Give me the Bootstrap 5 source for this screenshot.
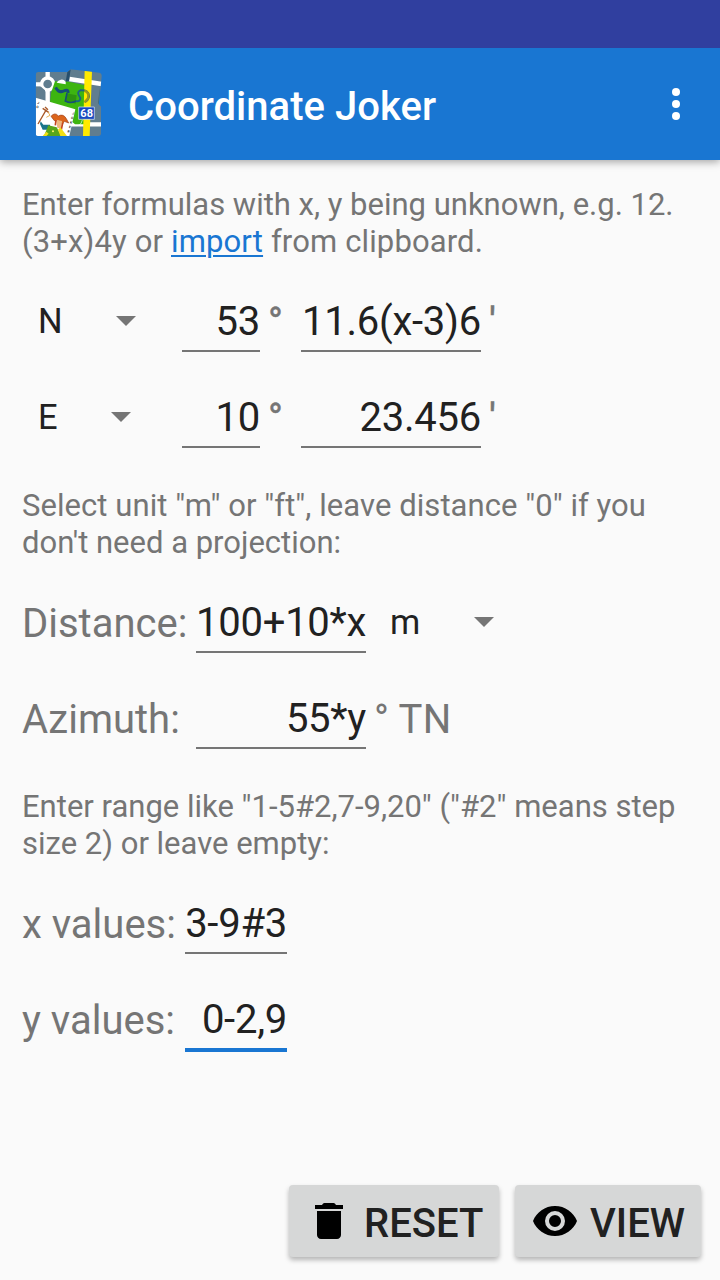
<!DOCTYPE html>
<html lang="en">
<head>
<meta charset="utf-8">
<meta name="viewport" content="width=device-width, initial-scale=1">
<title>Coordinate Joker</title>
<link href="https://cdn.jsdelivr.net/npm/bootstrap@5.3.0/dist/css/bootstrap.min.css" rel="stylesheet">
<style>
body{font-family:Roboto,"Liberation Sans",sans-serif;background:#fafafa;color:#212121;height:1280px;overflow:hidden}
.status-strip{height:48px;background:#303f9f;z-index:1}
.app-bar{height:112px;background:#1976d2;padding:0 0 0 30px;box-shadow:0 2px 8px rgba(0,0,0,.35)}
.app-title{font-size:40px;font-weight:500;line-height:48px;margin-left:18px;margin-top:6px;letter-spacing:.05px}
.page{padding:26px 22px 0;font-size:40px;line-height:48px}
.hint{font-size:31px;line-height:37px;color:#757575;white-space:nowrap;margin:-2px 0 37px}
.hint:first-child{margin-top:0}
.hint a{color:#1976d2;text-decoration-thickness:2px;text-underline-offset:3px}
.hint .wide{letter-spacing:.14px}
.form-line{height:96px}
.lbl{color:#757575;margin-top:2px;white-space:nowrap}
.lbl-proj{width:174px}.lbl-range{width:163px}
.deg{width:41px;padding-left:8px}.tick{width:217px;padding-left:8px}
.azi{padding-left:8px;letter-spacing:.25px}
.deg,.tick{-webkit-text-stroke:.5px #757575}
.field{height:55px;padding:0 0 5px;border:0;border-bottom:2px solid #757575;border-radius:0;background:none;color:#212121;font-size:40px;line-height:48px;text-align:right;letter-spacing:-.25px;outline:0}
.field.active{border-bottom:4px solid #1976d2;height:57px;padding-bottom:5px}
.pick{font-size:34.5px;line-height:49px}
.caret{width:20px;height:10px;background:#757575;clip-path:polygon(0 0,100% 0,50% 100%);margin-top:19px}
.pick-n{width:78px}.pick-e{width:73px}.pick-m{width:84px}
.w-deg{width:78px}.w-min{width:180px}.w-proj{width:170px}.w-range{width:102px}
.act-bar{padding:0 19px 23px}
.act{height:72px;padding:0 0 0 16px;background:#d6d7d7;border:0;border-radius:4px;font-size:40px;font-weight:500;line-height:48px;color:#212121;box-shadow:0 3px 5px rgba(0,0,0,.28)}
.act span{margin:5px 0 0 11px}
.act-reset{width:210px}.act-view{width:186px}
</style>
</head>
<body class="d-flex flex-column">
<div class="status-strip flex-shrink-0 position-relative"></div>
<nav class="app-bar d-flex align-items-center text-white flex-shrink-0">
<svg width="80" height="80" viewBox="0 0 240 240" aria-hidden="true">
<defs><clipPath id="tile"><path d="M24 24H112L122 16L208 26Q216 28 215 38L206 122L213 128V210Q212 216 205 216H24Q17 216 17 208V32Q17 25 24 24Z"/></clipPath></defs>
<g clip-path="url(#tile)">
<path fill="#607d8f" d="M0 0H240V240H0Z"/>
<path stroke="#fff" stroke-width="13" fill="none" d="M53 20V140M17 61H120M118 45L215 60M120 181H215"/>
<circle cx="53" cy="60" r="18" fill="#607d8f" stroke="#fff" stroke-width="10"/>
<path fill="#3db510" d="M75 52H110L165 64V181H135L60 115L63 87Z"/>
<path fill="#607d8f" d="M189 68H215V174H186ZM17 68H33L45 79V108L17 99Z"/>
<path fill="#264f6c" d="M112 24L122 16L117 51L107 53Z"/>
<path fill="#fff" d="M84 51Q98 41 107 53V61L80 56Z"/>
<path fill="#ffea00" d="M164 20H186L179 216H159Z"/>
<path fill="#2d9410" d="M109 88L140 94L137 119L106 111Z"/>
<path fill="none" stroke="#154f76" stroke-width="9" d="M77 70Q86 88 101 81T114 87"/>
<path fill="none" stroke="#154f76" stroke-width="5" d="M111 87L106 111Q122 120 138 111"/>
<path fill="none" stroke="#196582" stroke-width="6" d="M138 111Q151 114 151 102Q138 84 151 79Q177 77 177 97Q174 111 164 114"/>
<path fill="none" stroke="#9d9819" stroke-width="7" d="M163 80Q179 86 174 103L164 115"/>
<path fill="#2b5b73" opacity=".65" d="M204 119L209 71V119Z"/>
<path fill="#fff" d="M17 101L136 136L118 216H17Z"/>
<g fill="#333" font-family="Roboto,sans-serif" font-size="10" font-weight="700">
<text transform="translate(21 119) rotate(16)">J</text><text transform="translate(18 131) rotate(16)">O</text>
<text transform="translate(126 151) rotate(16)">J</text><text transform="translate(122 164) rotate(16)">O</text><text transform="translate(119 178) rotate(16)">K</text><text transform="translate(116 191) rotate(16)">E</text><text transform="translate(112 205) rotate(16)">R</text></g>
<path fill="none" stroke="#a85828" stroke-width="4" d="M24 180L49 137M38 133L57 146M45 129L54 137"/>
<path fill="none" stroke="#e8b15a" stroke-width="3" d="M54 144L60 154L49 160"/>
<path fill="#dc651c" stroke="#9b3d17" stroke-width="2" d="M63 157Q75 143 85 156Q100 148 109 164L116 177L103 172L98 180Q88 166 73 170Z"/>
<path fill="#efb77e" d="M79 167L96 171L94 193L82 192Z"/>
<path fill="none" stroke="#c5451c" stroke-width="5" d="M78 168L76 184M98 177L94 197"/>
<path fill="#18758a" d="M32 172L40 182L60 182V197L38 197L30 180Z"/>
<path fill="#59a61b" d="M55 184L80 190L94 216H42Z"/>
<path fill="#f2df14" d="M91 190L111 216H91L84 197ZM49 203L56 209L49 216H38Z"/>
<circle cx="69" cy="202" r="3" fill="#fff36a"/>
<path fill="#1949bf" stroke="#dce8ff" stroke-width="2" d="M146 129H193V166H146Z"/>
<text x="151" y="158" font-family="Roboto,sans-serif" font-size="31" font-weight="700" fill="#fff" textLength="38" lengthAdjust="spacingAndGlyphs">68</text>
<path fill="none" stroke="#e5fff7" stroke-width="2" d="M157 168Q155 181 145 184"/>
</g></svg>
<div class="app-title">Coordinate Joker</div>
<svg class="ms-auto" width="88" height="48" viewBox="0 0 88 48" fill="#fff"><circle cx="44" cy="12" r="4"/><circle cx="44" cy="24" r="4"/><circle cx="44" cy="36" r="4"/></svg>
</nav>
<main class="page">
<p class="hint">Enter formulas with x, y being unknown, e.g. 12.<br><span class="wide">(3+x)4y or <a href="#">import</a> from clipboard.</span></p>
<div class="form-line d-flex align-items-start"><div class="pick d-flex ps-3"><div class="pick-n">N</div><i class="caret"></i></div><input class="field w-deg ms-auto" value="53"><span class="lbl deg">°</span><input class="field w-min" value="11.6(x-3)6"><span class="lbl tick">'</span></div>
<div class="form-line d-flex align-items-start"><div class="pick d-flex ps-3"><div class="pick-e">E</div><i class="caret"></i></div><input class="field w-deg ms-auto" value="10"><span class="lbl deg">°</span><input class="field w-min" value="23.456"><span class="lbl tick">'</span></div>
<p class="hint"><span style="letter-spacing:.06px">Select unit "m" or "ft", leave distance "0" if you</span><br>don't need a projection:</p>
<div class="form-line d-flex align-items-start"><label class="lbl lbl-proj">Distance:</label><input class="field w-proj" value="100+10*x"><div class="pick d-flex ps-4"><div class="pick-m">m</div><i class="caret"></i></div></div>
<div class="form-line d-flex align-items-start"><label class="lbl lbl-proj">Azimuth:</label><input class="field w-proj" value="55*y"><span class="lbl azi">° TN</span></div>
<p class="hint">Enter range like "1-5#2,7-9,20" ("#2" means step<br>size 2) or leave empty:</p>
<div class="form-line d-flex align-items-start"><label class="lbl lbl-range">x values:</label><input class="field w-range" value="3-9#3"></div>
<div class="form-line d-flex align-items-start"><label class="lbl lbl-range">y values:</label><input class="field w-range active" value="0-2,9"></div>
</main>
<div class="act-bar d-flex justify-content-end mt-auto gap-3">
<button class="act act-reset d-flex align-items-center"><svg width="48" height="48" viewBox="0 0 24 24"><path d="M6 19c0 1.100.9 2 2 2h8c1.100 0 2-.9 2-2V7H6v12ZM19 4h-3.500Q15 3 14.300 3H9.700Q9 3 8.500 4H5v2h14V4Z"/></svg><span>RESET</span></button>
<button class="act act-view d-flex align-items-center"><svg width="48" height="48" viewBox="0 0 24 24"><path d="M12 4.500C7 4.500 2.730 7.610 1 12c1.730 4.390 6 7.500 11 7.500s9.270-3.110 11-7.500c-1.730-4.390-6-7.500-11-7.500ZM12 17a5 5 0 1 1 0-10 5 5 0 0 1 0 10Zm0-8a3 3 0 1 0 0 6 3 3 0 0 0 0-6Z"/></svg><span>VIEW</span></button>
</div>
</body>
</html>
